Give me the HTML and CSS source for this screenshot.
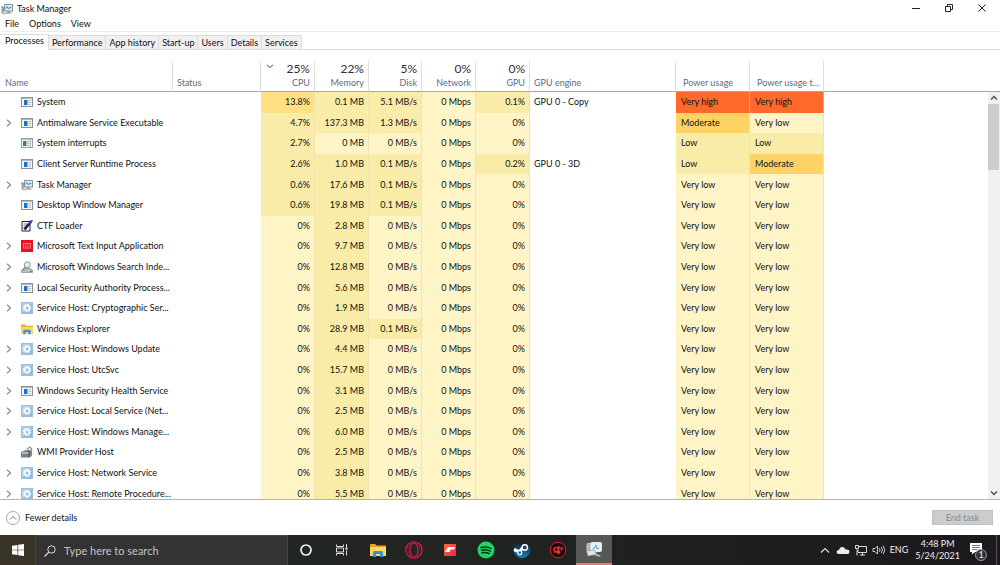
FILE: index.html
```html
<!DOCTYPE html>
<html lang="en">
<head>
<meta charset="utf-8">
<title>Task Manager</title>
<link rel="stylesheet" href="styles.css">
</head>
<body>
<svg class="sprite" aria-hidden="true">
  <symbol id="app" viewBox="0 0 12 10"><rect x=".5" y=".5" width="11" height="9" fill="#f4f4f4" stroke="#8c9094"/><path d="M1 1.3h10" stroke="#a4a8ac"/><rect x="3" y="3" width="3.5" height="5" fill="#1273d0"/><path d="M7.5 3.5h2.5M7.5 5.5h2.5M7.5 7.5h2" stroke="#a0a8b0" stroke-width=".8"/></symbol>
  <symbol id="intr" viewBox="0 0 12 10"><rect x=".5" y=".5" width="11" height="9" fill="#f1f3f1" stroke="#9a9e9c"/><path d="M1 1.3h10" stroke="#b4b8b6"/><rect x="2" y="3" width="3.5" height="5" fill="#3c8474"/><path d="M6.5 3.5h1.5M6.5 5.5h1.5M6.5 7.5h1.5M9.2 2v7" stroke="#8f9f99" stroke-width=".8"/></symbol>
  <symbol id="tm" viewBox="0 0 12 12"><path d="M.5 4h2.500v6.500H.5z" fill="#9a9ea0"/><path d="M.3 4h2" stroke="#4fae52" stroke-width="1.200"/><rect x="3.500" y="1.500" width="8" height="6.500" fill="#d6eefa" stroke="#89949a"/><path d="M4.500 5.500l1.500-2 1.500 2.500 1.500-2 1.500.8" fill="none" stroke="#1f86bd" stroke-width=".9"/><path d="M6.500 8v1.500h-1v1h5v-1h-2V8z" fill="#8b9093"/><path d="M1.500 8.500l3-1 1 3-3 .7z" fill="#dfe2e3" stroke="#8d9295" stroke-width=".6"/></symbol>
  <symbol id="ctf" viewBox="0 0 12 12"><path d="M1 1.500h8v9.500H1z" fill="#fff" stroke="#222"/><path d="M2.500 4h4M2.500 6h3M2.500 8h2" stroke="#444" stroke-width=".7"/><path d="M3.500 9.500L10.500 1" stroke="#111a66" stroke-width="2.700"/><path d="M8 4l3.500-4" stroke="#3260dd" stroke-width="1.500"/></symbol>
  <symbol id="kbd" viewBox="0 0 12 12"><path d="M0 0h12v12H0z" fill="#e81123"/><rect x="2.500" y="3.500" width="7" height="4.500" fill="none" stroke="#ff8c96" stroke-width=".8"/><path d="M3.500 5h5M4 6.500h4" stroke="#ff8c96" stroke-width=".8" stroke-dasharray="1 .6"/></symbol>
  <symbol id="find" viewBox="0 0 12 12"><path d="M.5 9l3-2h5l3 2v2.500H.5z" fill="#b5babd" stroke="#868c8f" stroke-width=".7"/><circle cx="6.300" cy="3.800" r="3" fill="#dcecf7" stroke="#8a959c"/><path d="M4.200 6L2 9" stroke="#7c8488" stroke-width="1.200"/><path d="M9 10.500h2" stroke="#4ea33e"/></symbol>
  <symbol id="gear" viewBox="0 0 12 12"><path d="M0 0h12v12H0z" fill="#8fbbe2"/><path d="M0 0h12L0 12z" fill="#a9cfec"/><path d="M.5.5h11v11H.5z" fill="none" stroke="#9dbfdc"/><circle cx="6" cy="6" r="2.400" fill="none" stroke="#fff" stroke-width="1.500"/><circle cx="6" cy="6" r="3.600" fill="none" stroke="#fff" stroke-width="1.200" stroke-dasharray="1.400 1.427"/></symbol>
  <symbol id="folder" viewBox="0 0 16 14"><path d="M0 1.500Q0 1 .5 1H5l1.500 1.500h9q.5 0 .5.500V13H0z" fill="#e9a51f"/><path d="M0 4h16v9H0z" fill="#ffd661"/><path d="M3 14V9.500Q3 8 4.500 8h7Q13 8 13 9.500V14h-3v-3H6v3z" fill="#3b91d6"/></symbol>
  <symbol id="wmi" viewBox="0 0 12 12"><path d="M0 6l5-2h4l2 1v5l-3 1.500H0z" fill="#7b8084"/><path d="M1 6h7v2H1z" fill="#b0b6ba"/><path d="M8 5v6.500" stroke="#45494d"/><path d="M6 3.500L8.500 1l2 1.500v3" fill="none" stroke="#8c9296" stroke-width="1.300"/><path d="M9.500 7h1.500v3H9.500z" fill="#5b9ad0"/></symbol>
  <symbol id="chev" viewBox="0 0 6 8"><path d="M1 .8L4.500 4 1 7.200" fill="none" stroke="#8c8c8c" stroke-width="1.200"/></symbol>
</svg>
<div class="desktop">
  <main class="window">
    <header class="titlebar">
      <svg class="title-icon"><use href="#tm"/></svg>
      <h1>Task Manager</h1>
      <div class="controls">
        <button aria-label="Minimize"><svg viewBox="0 0 10 10"><path d="M1 5.500h8" stroke="#222"/></svg></button>
        <button aria-label="Restore"><svg viewBox="0 0 10 10"><path d="M1.500 3.500h5v5h-5zM3.500 3.500v-2h5v5h-2" fill="none" stroke="#222"/></svg></button>
        <button aria-label="Close"><svg viewBox="0 0 10 10"><path d="M1.500 1.500l7 7M8.500 1.500l-7 7" stroke="#222"/></svg></button>
      </div>
    </header>
    <nav class="menu"><button>File</button><button>Options</button><button>View</button></nav>
    <div class="tabs" role="tablist">
      <button role="tab" class="tab active" aria-selected="true">Processes</button><button role="tab" class="tab">Performance</button><button role="tab" class="tab">App history</button><button role="tab" class="tab">Start-up</button><button role="tab" class="tab">Users</button><button role="tab" class="tab">Details</button><button role="tab" class="tab">Services</button>
    </div>
    <section class="list">
      <table>
        <colgroup><col class="c-name"><col class="c-status"><col class="c-num"><col class="c-num"><col class="c-disk"><col class="c-num"><col class="c-num"><col class="c-engine"><col class="c-power"><col class="c-power"><col></colgroup>
        <thead><tr>
          <th>Name</th><th class="pad">Status</th>
          <th class="num"><svg class="sort" viewBox="0 0 8 5"><path d="M1 1l3 2.500L7 1" fill="none" stroke="#7d8aa0" stroke-width="1.200"/></svg><b>25%</b>CPU</th><th class="num"><b>22%</b>Memory</th><th class="num"><b>5%</b>Disk</th><th class="num"><b>0%</b>Network</th><th class="num"><b>0%</b>GPU</th>
          <th class="pad">GPU engine</th><th class="power">Power usage</th><th class="power">Power usage t...</th><th class="rest"></th>
        </tr></thead>
        <tbody>
          <tr><td><div class="proc"><i></i><svg class="ico"><use href="#app"/></svg>System</div></td><td></td><td class="n warm">13.8%</td><td class="n mid">0.1 MB</td><td class="n mid">5.1 MB/s</td><td class="n">0 Mbps</td><td class="n mid">0.1%</td><td class="pad">GPU 0 - Copy</td><td class="p high">Very high</td><td class="p high">Very high</td><td></td></tr>
          <tr><td><div class="proc"><button aria-label="Expand"><svg><use href="#chev"/></svg></button><svg class="ico"><use href="#app"/></svg>Antimalware Service Executable</div></td><td></td><td class="n mid">4.7%</td><td class="n mid">137.3 MB</td><td class="n mid">1.3 MB/s</td><td class="n">0 Mbps</td><td class="n">0%</td><td></td><td class="p moderate">Moderate</td><td class="p">Very low</td><td></td></tr>
          <tr><td><div class="proc"><i></i><svg class="ico"><use href="#intr"/></svg>System interrupts</div></td><td></td><td class="n mid">2.7%</td><td class="n">0 MB</td><td class="n">0 MB/s</td><td class="n">0 Mbps</td><td class="n">0%</td><td></td><td class="p mid">Low</td><td class="p mid">Low</td><td></td></tr>
          <tr><td><div class="proc"><i></i><svg class="ico"><use href="#app"/></svg>Client Server Runtime Process</div></td><td></td><td class="n mid">2.6%</td><td class="n mid">1.0 MB</td><td class="n mid">0.1 MB/s</td><td class="n">0 Mbps</td><td class="n mid">0.2%</td><td class="pad">GPU 0 - 3D</td><td class="p mid">Low</td><td class="p moderate">Moderate</td><td></td></tr>
          <tr><td><div class="proc"><button aria-label="Expand"><svg><use href="#chev"/></svg></button><svg class="ico"><use href="#tm"/></svg>Task Manager</div></td><td></td><td class="n mid">0.6%</td><td class="n mid">17.6 MB</td><td class="n mid">0.1 MB/s</td><td class="n">0 Mbps</td><td class="n">0%</td><td></td><td class="p">Very low</td><td class="p">Very low</td><td></td></tr>
          <tr><td><div class="proc"><i></i><svg class="ico"><use href="#app"/></svg>Desktop Window Manager</div></td><td></td><td class="n mid">0.6%</td><td class="n mid">19.8 MB</td><td class="n mid">0.1 MB/s</td><td class="n">0 Mbps</td><td class="n">0%</td><td></td><td class="p">Very low</td><td class="p">Very low</td><td></td></tr>
          <tr><td><div class="proc"><i></i><svg class="ico"><use href="#ctf"/></svg>CTF Loader</div></td><td></td><td class="n">0%</td><td class="n mid">2.8 MB</td><td class="n">0 MB/s</td><td class="n">0 Mbps</td><td class="n">0%</td><td></td><td class="p">Very low</td><td class="p">Very low</td><td></td></tr>
          <tr><td><div class="proc"><button aria-label="Expand"><svg><use href="#chev"/></svg></button><svg class="ico"><use href="#kbd"/></svg>Microsoft Text Input Application</div></td><td></td><td class="n">0%</td><td class="n mid">9.7 MB</td><td class="n">0 MB/s</td><td class="n">0 Mbps</td><td class="n">0%</td><td></td><td class="p">Very low</td><td class="p">Very low</td><td></td></tr>
          <tr><td><div class="proc"><button aria-label="Expand"><svg><use href="#chev"/></svg></button><svg class="ico"><use href="#find"/></svg>Microsoft Windows Search Inde...</div></td><td></td><td class="n">0%</td><td class="n mid">12.8 MB</td><td class="n">0 MB/s</td><td class="n">0 Mbps</td><td class="n">0%</td><td></td><td class="p">Very low</td><td class="p">Very low</td><td></td></tr>
          <tr><td><div class="proc"><button aria-label="Expand"><svg><use href="#chev"/></svg></button><svg class="ico"><use href="#app"/></svg>Local Security Authority Process...</div></td><td></td><td class="n">0%</td><td class="n mid">5.6 MB</td><td class="n">0 MB/s</td><td class="n">0 Mbps</td><td class="n">0%</td><td></td><td class="p">Very low</td><td class="p">Very low</td><td></td></tr>
          <tr><td><div class="proc"><button aria-label="Expand"><svg><use href="#chev"/></svg></button><svg class="ico"><use href="#gear"/></svg>Service Host: Cryptographic Ser...</div></td><td></td><td class="n">0%</td><td class="n mid">1.9 MB</td><td class="n">0 MB/s</td><td class="n">0 Mbps</td><td class="n">0%</td><td></td><td class="p">Very low</td><td class="p">Very low</td><td></td></tr>
          <tr><td><div class="proc"><i></i><svg class="ico"><use href="#folder"/></svg>Windows Explorer</div></td><td></td><td class="n">0%</td><td class="n mid">28.9 MB</td><td class="n mid">0.1 MB/s</td><td class="n">0 Mbps</td><td class="n">0%</td><td></td><td class="p">Very low</td><td class="p">Very low</td><td></td></tr>
          <tr><td><div class="proc"><button aria-label="Expand"><svg><use href="#chev"/></svg></button><svg class="ico"><use href="#gear"/></svg>Service Host: Windows Update</div></td><td></td><td class="n">0%</td><td class="n mid">4.4 MB</td><td class="n">0 MB/s</td><td class="n">0 Mbps</td><td class="n">0%</td><td></td><td class="p">Very low</td><td class="p">Very low</td><td></td></tr>
          <tr><td><div class="proc"><button aria-label="Expand"><svg><use href="#chev"/></svg></button><svg class="ico"><use href="#gear"/></svg>Service Host: UtcSvc</div></td><td></td><td class="n">0%</td><td class="n mid">15.7 MB</td><td class="n">0 MB/s</td><td class="n">0 Mbps</td><td class="n">0%</td><td></td><td class="p">Very low</td><td class="p">Very low</td><td></td></tr>
          <tr><td><div class="proc"><button aria-label="Expand"><svg><use href="#chev"/></svg></button><svg class="ico"><use href="#app"/></svg>Windows Security Health Service</div></td><td></td><td class="n">0%</td><td class="n mid">3.1 MB</td><td class="n">0 MB/s</td><td class="n">0 Mbps</td><td class="n">0%</td><td></td><td class="p">Very low</td><td class="p">Very low</td><td></td></tr>
          <tr><td><div class="proc"><button aria-label="Expand"><svg><use href="#chev"/></svg></button><svg class="ico"><use href="#gear"/></svg>Service Host: Local Service (Net...</div></td><td></td><td class="n">0%</td><td class="n mid">2.5 MB</td><td class="n">0 MB/s</td><td class="n">0 Mbps</td><td class="n">0%</td><td></td><td class="p">Very low</td><td class="p">Very low</td><td></td></tr>
          <tr><td><div class="proc"><button aria-label="Expand"><svg><use href="#chev"/></svg></button><svg class="ico"><use href="#gear"/></svg>Service Host: Windows Manage...</div></td><td></td><td class="n">0%</td><td class="n mid">6.0 MB</td><td class="n">0 MB/s</td><td class="n">0 Mbps</td><td class="n">0%</td><td></td><td class="p">Very low</td><td class="p">Very low</td><td></td></tr>
          <tr><td><div class="proc"><i></i><svg class="ico"><use href="#wmi"/></svg>WMI Provider Host</div></td><td></td><td class="n">0%</td><td class="n mid">2.5 MB</td><td class="n">0 MB/s</td><td class="n">0 Mbps</td><td class="n">0%</td><td></td><td class="p">Very low</td><td class="p">Very low</td><td></td></tr>
          <tr><td><div class="proc"><button aria-label="Expand"><svg><use href="#chev"/></svg></button><svg class="ico"><use href="#gear"/></svg>Service Host: Network Service</div></td><td></td><td class="n">0%</td><td class="n mid">3.8 MB</td><td class="n">0 MB/s</td><td class="n">0 Mbps</td><td class="n">0%</td><td></td><td class="p">Very low</td><td class="p">Very low</td><td></td></tr>
          <tr><td><div class="proc"><button aria-label="Expand"><svg><use href="#chev"/></svg></button><svg class="ico"><use href="#gear"/></svg>Service Host: Remote Procedure...</div></td><td></td><td class="n">0%</td><td class="n mid">5.5 MB</td><td class="n">0 MB/s</td><td class="n">0 Mbps</td><td class="n">0%</td><td></td><td class="p">Very low</td><td class="p">Very low</td><td></td></tr>
        </tbody>
      </table>
      <div class="scrollbar">
        <button aria-label="Scroll up"><svg viewBox="0 0 8 6"><path d="M1 4.500L4 1.500l3 3" fill="none" stroke="#505050" stroke-width="1.500"/></svg></button>
        <div class="thumb"></div>
        <button aria-label="Scroll down"><svg viewBox="0 0 8 6"><path d="M1 1.500l3 3 3-3" fill="none" stroke="#505050" stroke-width="1.500"/></svg></button>
      </div>
    </section>
    <footer class="footer">
      <button class="fewer"><svg viewBox="0 0 14 14"><circle cx="7" cy="7" r="6.500" fill="none" stroke="#909090" stroke-width=".8"/><path d="M4 8.500l3-3 3 3" fill="none" stroke="#707070"/></svg>Fewer details</button>
      <button class="end" disabled>End task</button>
    </footer>
  </main>
  <div class="taskbar">
    <button class="start" aria-label="Start"><svg viewBox="0 0 12 12"><path d="M0 1.700L5.500.9v4.800H0zM6.200.8L12 0v5.700H6.200zM0 6.300h5.500v4.800L0 10.300zM6.200 6.300H12V12l-5.800-.8z" fill="#fff"/></svg></button>
    <label class="search"><svg viewBox="0 0 12 12"><circle cx="7.500" cy="4.500" r="3.700" fill="none" stroke="#ddd"/><path d="M4.800 7.200L.5 11.500" stroke="#ddd" stroke-width="1.200"/></svg><input type="text" placeholder="Type here to search" aria-label="Search"></label>
    <div class="apps">
      <button aria-label="Cortana"><svg viewBox="0 0 18 18"><circle cx="9" cy="9" r="5" fill="none" stroke="#f2f2f2" stroke-width="1.700"/></svg></button>
      <button aria-label="Task View"><svg viewBox="0 0 18 18"><path d="M3.500 3.500v2h7v-2M3.500 14.500v-2h7v2M3.500 7h7v4h-7zM13.500 3v3M13.500 9.500v5" fill="none" stroke="#ddd"/><path d="M12.500 7.500h2" stroke="#fff" stroke-width="2"/></svg></button>
      <button aria-label="File Explorer"><svg viewBox="-1 -2 18 18"><use href="#folder" width="16" height="14"/></svg></button>
      <button aria-label="Opera"><svg viewBox="0 0 18 18"><circle cx="9" cy="9" r="8.200" fill="none" stroke="#d81e46" stroke-width="1.200"/><ellipse cx="9" cy="9" rx="4" ry="7" fill="none" stroke="#d81e46" stroke-width="1.200"/><ellipse cx="9" cy="9" rx="6" ry="8" fill="none" stroke="#8e1935" stroke-width=".7"/></svg></button>
      <button aria-label="Launcher"><svg viewBox="0 0 18 18"><defs><linearGradient id="lg" x2="1" y2="1"><stop stop-color="#ff6937"/><stop offset="1" stop-color="#ef1f58"/></linearGradient></defs><path d="M3 3h12v12H3z" fill="url(#lg)"/><path d="M7 6h7l-1 2.500H9.500L8.500 11H4l1-2z" fill="#fff"/></svg></button>
      <button aria-label="Spotify"><svg viewBox="0 0 18 18"><circle cx="9" cy="9" r="8.500" fill="#1ed760"/><path d="M4 6.500q5.500-1.500 10.200 1M4.500 9.200q5-1.200 8.800 1M5 11.800q4-1 7.200.8" fill="none" stroke="#12291a" stroke-width="1.400" stroke-linecap="round"/></svg></button>
      <button aria-label="Steam"><svg viewBox="0 0 18 18"><defs><linearGradient id="sg" x2="0" y2="1"><stop stop-color="#101b3e"/><stop offset="1" stop-color="#1684bd"/></linearGradient></defs><circle cx="9" cy="9" r="8.300" fill="url(#sg)"/><path d="M1 8.500l5.500 2.300L9.300 7" fill="none" stroke="#fff" stroke-width="3"/><circle cx="11.800" cy="6.500" r="2.700" fill="#274169" stroke="#fff" stroke-width="1.400"/><circle cx="6.700" cy="11.700" r="2" fill="#2b638f" stroke="#fff" stroke-width="1.200"/></svg></button>
      <button aria-label="Red gear app"><svg viewBox="0 0 18 18"><circle cx="9" cy="9" r="7.800" fill="#160b0c" stroke="#e02029"/><path d="M4 8l2-2.500 2 1 1.500-2 1.500 2 3-.5-.5 3-2.500 1 .5 2-2.500 1.500-1.500-2-2.500.5z" fill="#ef2831"/><circle cx="7" cy="8.500" r="1.300" fill="#160b0c"/><path d="M9.500 9.500l1.500-2 .5 2" stroke="#160b0c" fill="none"/></svg></button>
      <button class="current" aria-label="Task Manager"><svg viewBox="0 0 18 18"><rect x="2" y="3.500" width="4" height="9" rx="1" fill="#aeb4b6" stroke="#dcdfe0" stroke-width=".8"/><rect x="6" y="2.500" width="10.500" height="9" rx="1" fill="#e4f2f7" stroke="#e9eced"/><path d="M7.500 9l2-1 1.500-3 1 4 2-1" fill="none" stroke="#5aa4ca"/><path d="M11 11.500l1 2.500 4 2-1.500.8-5-1.500-.5-3.800z" fill="#b5babc"/><path d="M1.500 11l8-1 1.500 4.500-8 1.500z" fill="#e3e5e6" stroke="#8d9294" stroke-width=".6"/></svg></button>
    </div>
    <div class="tray">
      <button aria-label="Show hidden icons"><svg viewBox="0 0 14 12"><path d="M3 8.500l4-4 4 4" fill="none" stroke="#ddd" stroke-width="1.200"/></svg></button>
      <button aria-label="OneDrive"><svg viewBox="0 0 14 12"><path d="M3 10q-2.500 0-2.500-2T3 6q.5-3 3.500-3 2.200 0 3 2.500 4-.5 4 2.300 0 2.200-2 2.200z" fill="#eee"/></svg></button>
      <button aria-label="Network"><svg viewBox="0 0 14 12"><path d="M5 2.500h7.500v6H4v-3M8.500 8.500v3M6 11h5M3 5.500v6M1.500 1.500h3v3h-3z" fill="none" stroke="#ddd"/></svg></button>
      <button aria-label="Volume"><svg viewBox="0 0 14 12"><path d="M1 4.500h2l2.500-2.500v8L3 7.500H1zM7.300 4.200q1.400 1.800 0 3.600M9.300 3q2.200 3 0 6M11.300 1.800q3 4.200 0 8.400" fill="none" stroke="#ddd" stroke-width=".9"/></svg></button>
      <span class="lang">ENG</span>
      <div class="clock"><time>4:48 PM</time><time>5/24/2021</time></div>
      <button class="notes" aria-label="Notifications"><svg viewBox="0 0 20 18"><path d="M2 2h12v9H7l-3 2.500V11H2z" fill="#fff"/><path d="M4 4.500h8M4 6.500h8M4 8.500h5" stroke="#555" stroke-width=".8"/></svg><span class="badge">1</span></button>
      <button class="peek" aria-label="Show desktop"></button>
    </div>
  </div>
</div>
</body>
</html>
```
FILE: styles.css
```css
* { box-sizing: border-box; }
body { margin: 0; font: 9px/12px Lato, "Open Sans", sans-serif; color: #111; background: #fff; }
button { margin: 0; padding: 0; border: 0; background: none; font: inherit; color: inherit; }
svg { display: block; flex: none; }
.sprite { position: absolute; width: 0; height: 0; }
.desktop { height: 100vh; display: flex; flex-direction: column; }
.window { flex: 1; min-height: 0; display: flex; flex-direction: column; }

.titlebar { display: flex; align-items: center; height: 17px; padding-left: 1px; gap: 4px; flex: none; }
.title-icon { width: 12px; height: 12px; }
h1 { margin: 0; font-size: 9px; font-weight: 400; }
.controls { margin-left: auto; display: flex; align-self: flex-start; padding-right: 2px; }
.controls button { width: 33px; height: 15px; display: grid; place-items: center; }
.controls svg { width: 10px; height: 10px; }
.menu { display: flex; gap: 10px; padding: 0 5px; height: 15px; flex: none; border-bottom: 1px solid #ececec; }
.tabs { display: flex; align-items: flex-end; height: 18px; flex: none; border-bottom: 1px solid #dcdcdc; }
.tab { height: 14px; padding: 0 3px; border: 1px solid #dcdcdc; border-left: 0; border-bottom: 0; background: #f0f0f0; }
.tab.active { height: 16px; padding: 0 4px 3px 5px; background: #fff; margin-bottom: -1px; }

.list { position: relative; flex: 1; min-height: 0; overflow: hidden; margin-top: 11px; border-bottom: 1px solid #b4b4b4; }
table { width: 100%; height: 443px; table-layout: fixed; border-collapse: separate; border-spacing: 0; }
.c-name { width: 173px; }
.c-status { width: 88px; }
.c-num { width: 54px; }
.c-disk { width: 53px; }
.c-engine { width: 146px; }
.c-power { width: 74px; }
th, td { padding: 0; text-align: left; font-weight: 400; white-space: nowrap; }
th { height: 31px; padding: 0 4px 2px 5px; vertical-align: bottom; color: #5a6b8a; border-right: 1px solid #dedede; border-bottom: 1px solid #a6a6a6; }
th.rest { border-right: 0; }
th.num { position: relative; text-align: right; }
th b { display: block; font-size: 12px; line-height: 16px; font-weight: 400; color: #303030; }
th.power { padding-left: 7px; }
.pad { padding-left: 4px; }
.sort { position: absolute; left: 5px; top: 3px; width: 8px; height: 5px; }
.n, .p { background: #fff4c5; border-right: 1px solid #f3e2ac; }
.n { padding-right: 4px; text-align: right; }
.p { padding-left: 5px; }
.mid { background: #f9eca8; }
.warm { background: #ffe183; }
.moderate { background: #ffd264; }
.high { background: #ff692b; border-color: #ff9b60; }
.proc { display: flex; align-items: center; padding-left: 6px; }
.proc i, .proc button { width: 15px; flex: none; }
.proc button svg { width: 6px; height: 8px; }
.ico { width: 12px; height: 12px; margin-right: 4px; }

.scrollbar { position: absolute; right: 0; top: 31px; bottom: 0; width: 12px; display: flex; flex-direction: column; background: #f0f0f0; }
.scrollbar button { height: 12px; display: grid; place-items: center; }
.scrollbar button:last-child { margin-top: auto; }
.scrollbar svg { width: 8px; height: 6px; }
.thumb { height: 66px; margin-right: 1px; background: #cdcdcd; }

.footer { height: 35px; flex: none; display: flex; align-items: center; justify-content: space-between; padding: 0 7px 0 6px; }
.fewer { display: flex; align-items: center; gap: 5px; }
.fewer svg { width: 14px; height: 14px; }
.end { width: 61px; height: 15px; background: #ccc; border: 1px solid #c0c0c0; color: #8688a0; }

.taskbar { height: 30px; flex: none; display: flex; background: linear-gradient(90deg, #272c27, #202320 50%, #1d191e); color: #eee; }
.start { width: 35px; display: grid; place-items: center; background: #393226; }
.start svg { width: 12px; height: 12px; }
.search { width: 253px; display: flex; align-items: center; gap: 8px; padding-left: 8px; background: #333; border: 1px solid #444; border-bottom: 0; }
.search svg { width: 12px; height: 12px; }
.search input { flex: 1; min-width: 0; padding: 0; border: 0; background: none; font: 11px/16px Lato, "Open Sans", sans-serif; color: #eee; }
.search input::placeholder { color: #c4c4c4; opacity: 1; }
.apps { display: flex; }
.apps button { width: 36px; display: grid; place-items: center; }
.apps svg { width: 18px; height: 18px; }
.apps .current { background: #555854; border-bottom: 2px solid #e87880; }
.tray { margin-left: auto; display: flex; align-items: center; gap: 4px; }
.tray svg { width: 14px; height: 12px; }
.clock { display: flex; flex-direction: column; align-items: center; margin: 0 4px 0 3px; }
.notes { position: relative; }
.tray .notes svg { width: 20px; height: 18px; }
.badge { position: absolute; right: 1px; bottom: -2px; width: 12px; height: 12px; border: 1px solid #999; border-radius: 50%; background: #333; line-height: 10px; text-align: center; }
.tray .peek { align-self: stretch; width: 4px; margin-left: 4px; border-left: 1px solid #555; }
```
